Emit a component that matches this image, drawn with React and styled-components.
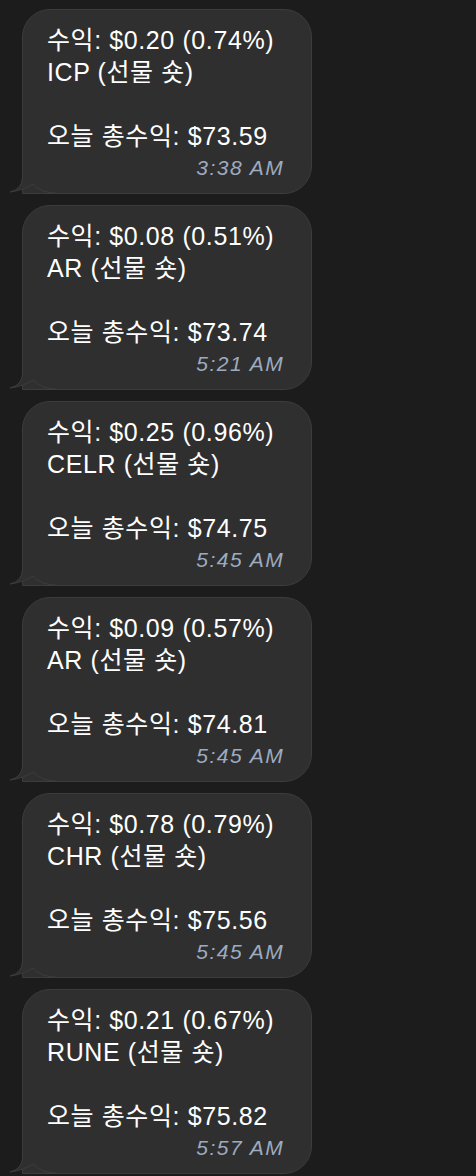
import styled, { createGlobalStyle } from "styled-components";

const messages = [
  { profit: "$0.20 (0.74%)", coin: "ICP", total: "$73.59", time: "3:38 AM" },
  { profit: "$0.08 (0.51%)", coin: "AR", total: "$73.74", time: "5:21 AM" },
  { profit: "$0.25 (0.96%)", coin: "CELR", total: "$74.75", time: "5:45 AM" },
  { profit: "$0.09 (0.57%)", coin: "AR", total: "$74.81", time: "5:45 AM" },
  { profit: "$0.78 (0.79%)", coin: "CHR", total: "$75.56", time: "5:45 AM" },
  { profit: "$0.21 (0.67%)", coin: "RUNE", total: "$75.82", time: "5:57 AM" },
];

const GlobalStyle = createGlobalStyle`
  html, body {
    margin: 0;
    background: #1c1c1d;
  }
  body {
    font-family: "Liberation Sans", "Noto Sans CJK KR", sans-serif;
  }
`;

// chat-column
const ChatList = styled.div`
  display: flex;
  flex-direction: column;
  align-items: flex-start;
  gap: 11px;
  padding: 9px 0 0 22px;
  height: 1176px;
  box-sizing: border-box;
  overflow: hidden;
`;

// message-bubble
const Bubble = styled.div`
  position: relative;
  background: #2f2f30;
  border: 1px solid #3c3c3e;
  border-radius: 28px 28px 28px 0;
  padding: 14px 27px 12px 24px;
  color: #ffffff;
`;

const BubbleText = styled.div`
  padding-right: 10px;
  font-size: 25px;
  line-height: 32px;
  letter-spacing: 0.6px;
  .blank {
    height: 32px;
  }
`;

const Time = styled.div`
  margin-top: 3px;
  text-align: right;
  font-size: 21px;
  line-height: 26px;
  font-style: italic;
  letter-spacing: 1.5px;
  color: #9eabbe;
`;

// bubble-tail
const Tail = styled.svg`
  position: absolute;
  left: -14px;
  bottom: -1px;
  width: 48px;
  height: 32px;
  overflow: visible;
`;

const BubbleTail = () => (
  <Tail viewBox="0 0 48 32">
    <path
      d="M13.5 0 L13.5 16 Q13 27 1 30 Q15 28 24 22 Q32 31 47 31 L47 0 Z"
      fill="#2f2f30"
    />
    <path
      d="M13.5 0 L13.5 16 Q13 27 1 30 Q15 28 24 22 Q32 31 47 31"
      fill="none"
      stroke="#3c3c3e"
      strokeWidth="1"
    />
  </Tail>
);

export default function App() {
  return (
    <>
      <GlobalStyle />
      <ChatList>
        {messages.map((m, i) => (
          <Bubble key={i}>
            <BubbleText>
              <div>수익: {m.profit}</div>
              <div>{m.coin} (선물 숏)</div>
              <div className="blank" />
              <div>오늘 총수익: {m.total}</div>
            </BubbleText>
            <Time>{m.time}</Time>
            <BubbleTail />
          </Bubble>
        ))}
      </ChatList>
    </>
  );
}
